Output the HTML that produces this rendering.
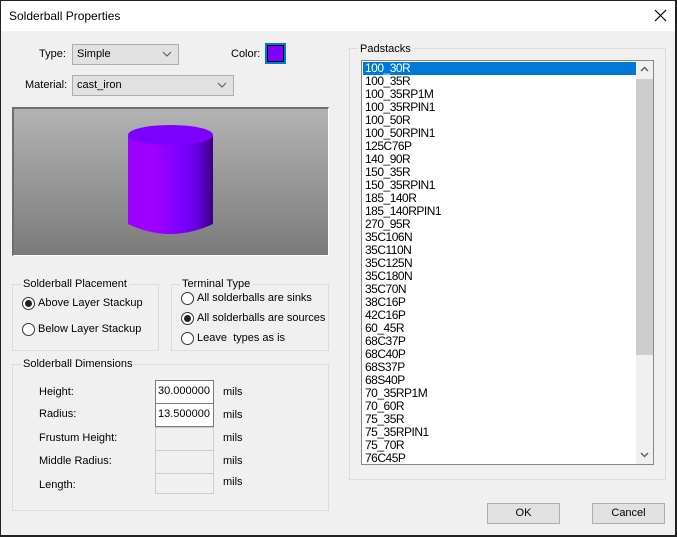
<!DOCTYPE html>
<html><head><style>
*{margin:0;padding:0;box-sizing:border-box}
body{width:677px;height:537px;overflow:hidden;background:#f0f0f0;font-family:"Liberation Sans",sans-serif;font-size:11px;color:#000;position:relative}
.a{position:absolute;white-space:nowrap}
.win{position:absolute;left:0;top:0;width:677px;height:537px;border:1px solid #222;border-right:2px solid #222;border-bottom:2px solid #222}
.title{position:absolute;left:1px;top:1px;width:674px;height:30px;background:#fff}
.combo{position:absolute;background:#e1e1e1;border:1px solid #adadad;height:21px;padding:3px 4px}
.chev{position:absolute;right:5px;top:4px;width:12px;height:10px}
.grp{position:absolute;border:1px solid #dcdcdc}
.gl{position:absolute;background:#f0f0f0;padding:0 2px;top:-7px;left:8px}
.radio{position:absolute;width:13px;height:13px;border:1px solid #333;border-radius:50%;background:#fff}
.radio.on::after{content:"";position:absolute;left:2px;top:2px;width:7px;height:7px;border-radius:50%;background:#222}
.inp{position:absolute;left:155px;width:59px;height:24px;border:1px solid #7a7a7a;background:#fff;padding:4px 2px;font-size:11px}
.inp.dis{border-color:#ccc;background:#f0f0f0}
.list{position:absolute;left:361px;top:60px;width:293px;height:405px;border:1px solid #828790;background:#fff;overflow:hidden}
.it{height:13px;line-height:13px;padding-left:3px;font-size:12px;letter-spacing:-0.5px}
.sel{background:#0078d7;color:#fff;width:273px;margin-left:1px;padding-left:2px}
.btn{position:absolute;top:503px;width:73px;height:21px;background:#e1e1e1;border:1px solid #adadad;text-align:center;line-height:19px}
</style></head><body>
<div class="title"></div>
<div class="a" style="left:9px;top:9px;font-size:12px">Solderball Properties</div>
<svg class="a" style="left:654px;top:9px" width="13" height="13"><path d="M1 1L12 12M12 1L1 12" stroke="#000" stroke-width="1.2"/></svg>

<div class="a" style="left:39px;top:48px">Type:</div>
<div class="combo" style="left:72px;top:44px;width:107px">Simple<svg class="chev" viewBox="0 0 12 10"><path d="M2 3L6 7L10 3" stroke="#555" fill="none"/></svg></div>
<div class="a" style="left:231px;top:48px">Color:</div>
<div class="a" style="left:265px;top:43px;width:21px;height:21px;border:2px solid #0078d7;background:#000;padding:1px"><div style="width:100%;height:100%;background:#8000ff"></div></div>
<div class="a" style="left:25px;top:79px">Material:</div>
<div class="combo" style="left:72px;top:75px;width:162px">cast_iron<svg class="chev" viewBox="0 0 12 10"><path d="M2 3L6 7L10 3" stroke="#555" fill="none"/></svg></div>

<div class="a" style="left:12px;top:107px;width:317px;height:149px;border:1px solid #fff;border-top:2px solid #6e6e6e;border-left:2px solid #6e6e6e;background:linear-gradient(#b3b3b3,#7b7b7b)"></div>
<svg class="a" style="left:120px;top:120px" width="100" height="120">
<defs><linearGradient id="g" x1="0" x2="1"><stop offset="0" stop-color="#9a00ff"/><stop offset="0.3" stop-color="#a000ff"/><stop offset="0.65" stop-color="#7a00ff"/><stop offset="0.82" stop-color="#6600dd"/><stop offset="1" stop-color="#3c0080"/></linearGradient></defs>
<path d="M8 15V104Q50 124 93 104V15Z" fill="url(#g)"/>
<ellipse cx="50.5" cy="15" rx="42.5" ry="10" fill="#7d00ff"/>
</svg>

<div class="grp" style="left:12px;top:284px;width:147px;height:67px"><span class="gl">Solderball Placement</span></div>
<div class="radio on" style="left:22px;top:297px"></div><div class="a" style="left:38px;top:297px">Above Layer Stackup</div>
<div class="radio" style="left:22px;top:323px"></div><div class="a" style="left:38px;top:323px">Below Layer Stackup</div>

<div class="grp" style="left:171px;top:284px;width:158px;height:67px"><span class="gl">Terminal Type</span></div>
<div class="radio" style="left:181px;top:292px"></div><div class="a" style="left:197px;top:292px">All solderballs are sinks</div>
<div class="radio on" style="left:181px;top:312px"></div><div class="a" style="left:197px;top:312px">All solderballs are sources</div>
<div class="radio" style="left:181px;top:332px"></div><div class="a" style="left:197px;top:332px">Leave&nbsp; types as is</div>

<div class="grp" style="left:12px;top:364px;width:317px;height:147px"><span class="gl">Solderball Dimensions</span></div>
<div class="a" style="left:39px;top:386px">Height:</div>
<div class="a" style="left:39px;top:408px">Radius:</div>
<div class="a" style="left:39px;top:432px">Frustum Height:</div>
<div class="a" style="left:39px;top:455px">Middle Radius:</div>
<div class="a" style="left:39px;top:479px">Length:</div>
<div class="inp" style="top:380px">30.000000</div>
<div class="inp" style="top:403px">13.500000</div>
<div class="inp dis" style="top:427px"></div>
<div class="inp dis" style="top:450px"></div>
<div class="inp dis" style="top:473px;height:21px"></div>
<div class="a" style="left:223px;top:386px">mils</div>
<div class="a" style="left:223px;top:409px">mils</div>
<div class="a" style="left:223px;top:432px">mils</div>
<div class="a" style="left:223px;top:455px">mils</div>
<div class="a" style="left:223px;top:476px">mils</div>

<div class="grp" style="left:349px;top:48px;width:317px;height:432px"><span class="gl" style="top:-6px">Padstacks</span></div>
<div class="list">
<div style="padding-top:1px">
<div class="it sel">100_30R</div><div class="it">100_35R</div><div class="it">100_35RP1M</div><div class="it">100_35RPIN1</div><div class="it">100_50R</div><div class="it">100_50RPIN1</div><div class="it">125C76P</div><div class="it">140_90R</div><div class="it">150_35R</div><div class="it">150_35RPIN1</div><div class="it">185_140R</div><div class="it">185_140RPIN1</div><div class="it">270_95R</div><div class="it">35C106N</div><div class="it">35C110N</div><div class="it">35C125N</div><div class="it">35C180N</div><div class="it">35C70N</div><div class="it">38C16P</div><div class="it">42C16P</div><div class="it">60_45R</div><div class="it">68C37P</div><div class="it">68C40P</div><div class="it">68S37P</div><div class="it">68S40P</div><div class="it">70_35RP1M</div><div class="it">70_60R</div><div class="it">75_35R</div><div class="it">75_35RPIN1</div><div class="it">75_70R</div><div class="it">76C45P</div>
</div>
<div class="a" style="left:274px;top:0;width:17px;height:403px;background:#f0f0f0"></div>
<div class="a" style="left:274px;top:18px;width:17px;height:276px;background:#cdcdcd"></div>
<svg class="a" style="left:278px;top:5px" width="9" height="7"><path d="M1 5L4.5 1.5L8 5" stroke="#606060" stroke-width="1.5" fill="none"/></svg>
<svg class="a" style="left:278px;top:390px" width="9" height="7"><path d="M1 2L4.5 5.5L8 2" stroke="#606060" stroke-width="1.5" fill="none"/></svg>
</div>

<div class="btn" style="left:487px">OK</div>
<div class="btn" style="left:592px">Cancel</div>
<div class="win"></div>
</body></html>
